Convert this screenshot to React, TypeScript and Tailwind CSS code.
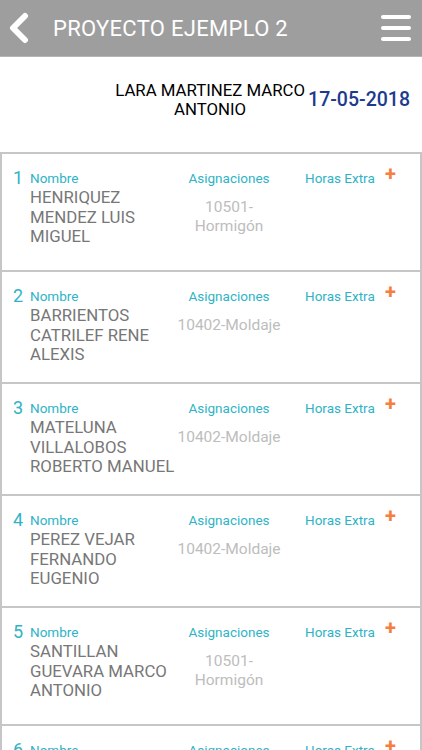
const rows = [
  { n: 1, name: ["HENRIQUEZ", "MENDEZ LUIS", "MIGUEL"], asig: ["10501-", "Hormigón"] },
  { n: 2, name: ["BARRIENTOS", "CATRILEF RENE", "ALEXIS"], asig: ["10402-Moldaje"] },
  { n: 3, name: ["MATELUNA", "VILLALOBOS", "ROBERTO MANUEL"], asig: ["10402-Moldaje"] },
  { n: 4, name: ["PEREZ VEJAR", "FERNANDO", "EUGENIO"], asig: ["10402-Moldaje"] },
  { n: 5, name: ["SANTILLAN", "GUEVARA MARCO", "ANTONIO"], asig: ["10501-", "Hormigón"] },
  { n: 6, name: ["SOTO", "RIQUELME", "JUAN"], asig: ["10402-Moldaje"] },
];

function Card({ row }: { row: (typeof rows)[number] }) {
  const tall = row.asig.length > 1;
  return (
    <div
      className={`flex border-x-2 border-t-2 border-[#c6c6c6] bg-white pt-[13px] ${
        tall ? "h-[118px]" : "h-[112px]"
      }`}
    >
      {/* number */}
      <div className="w-[28px] pl-[11px] text-[18px] leading-[22px] text-[#2fb3c6]">{row.n}</div>

      {/* nombre */}
      <div className="w-[146px]">
        <div className="pt-[2px] text-[13.5px] leading-[18px] text-[#2fb3c6]">Nombre</div>
        <div className="mt-[1px] text-[16.8px] leading-[19.5px] text-[#777777]">
          {row.name.map((l) => (
            <div key={l} className="whitespace-nowrap">{l}</div>
          ))}
        </div>
      </div>

      {/* asignaciones */}
      <div className="w-[106px] text-center">
        <div className="pt-[2px] text-[13.5px] leading-[18px] text-[#2fb3c6]">Asignaciones</div>
        <div className="mt-[11px] text-[15.5px] leading-[19px] text-[#bdbdbd]">
          {row.asig.map((l) => (
            <div key={l}>{l}</div>
          ))}
        </div>
      </div>

      {/* horas extra */}
      <div className="ml-[23px] w-[80px] whitespace-nowrap pt-[2px] text-[13.5px] leading-[18px] text-[#2fb3c6]">Horas Extra</div>
      <div className="-mt-[4px] text-[20px] font-bold leading-[22px] text-[#f47f3e]">+</div>
    </div>
  );
}

export default function App() {
  return (
    <div className="h-[750px] overflow-hidden bg-white font-['Roboto',sans-serif]">
      {/* header */}
      <div className="flex h-[57px] items-center border-b border-[#b5b5b5] bg-[#9e9e9e]">
        <svg width="22" height="32" viewBox="0 0 22 32" className="ml-[7px]">
          <path d="M18 4 L6 16 L18 28" fill="none" stroke="white" strokeWidth="6" strokeLinecap="round" strokeLinejoin="round" />
        </svg>
        <div className="ml-[24px] text-[22px] tracking-[0.3px] text-white">PROYECTO EJEMPLO 2</div>
        <div className="ml-auto mr-[11px] flex flex-col gap-[7px]">
          <div className="h-[4px] w-[30px] rounded-sm bg-white" />
          <div className="h-[4px] w-[30px] rounded-sm bg-white" />
          <div className="h-[4px] w-[30px] rounded-sm bg-white" />
        </div>
      </div>

      {/* worker + date */}
      <div className="flex h-[95px] items-center justify-end pb-[9px] pr-[12px]">
        <div className="text-center text-[16.8px] leading-[19px] text-black">
          <div>LARA MARTINEZ MARCO</div>
          <div>ANTONIO</div>
        </div>
        <div className="ml-[3px] text-[19.5px] font-medium text-[#1d3b8e]">17-05-2018</div>
      </div>

      {/* list */}
      <div>
        {rows.map((r) => (
          <Card key={r.n} row={r} />
        ))}
      </div>
    </div>
  );
}
